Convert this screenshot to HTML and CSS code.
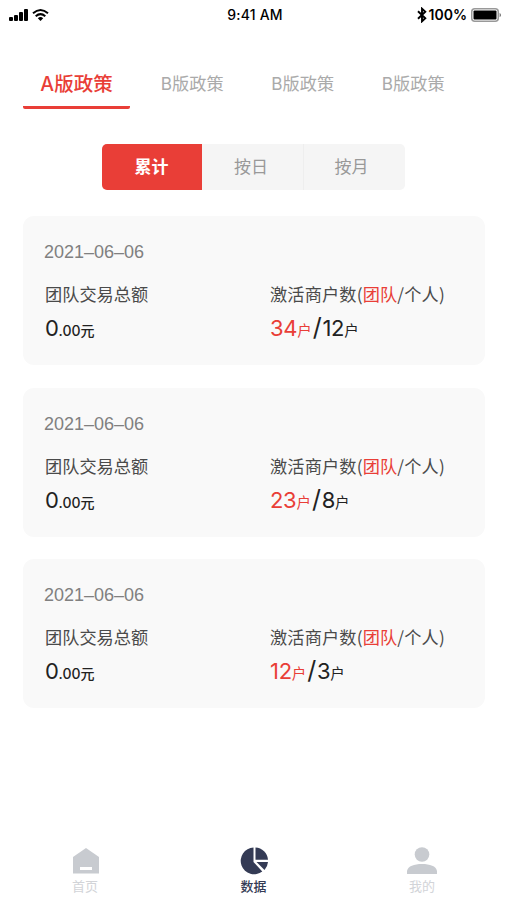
FILE: index.html
```html
<!DOCTYPE html>
<html lang="zh-CN">
<head>
    <meta charset="UTF-8">
    <title>数据</title>
    <link rel="stylesheet" href="styles.css">
</head>
<body>
    <div class="status">
        <div class="status-left">
            <svg width="19" height="12" viewBox="0 0 19 12"><rect x="0" y="8" width="4" height="4" rx="1"/><rect x="5" y="6" width="4" height="6" rx="1"/><rect x="10" y="3" width="4" height="9" rx="1"/><rect x="15" y="0" width="4" height="12" rx="1"/></svg>
            <svg width="17" height="12" viewBox="0 0 17 12"><path d="M1 4.3Q8.5-2.2 16 4.3M3.7 7.2Q8.5 3 13.3 7.2" fill="none" stroke="#000" stroke-width="2"/><path d="M5.8 9.2Q8.5 7 11.2 9.2L8.5 12z"/></svg>
        </div>
        <div class="clock">9:41 AM</div>
        <div class="status-right">
            <svg width="10" height="16" viewBox="0 0 10 16"><path d="M1 4.3L8.3 11.2L5 14.3V1.7L8.3 4.8L1 11.7" fill="none" stroke="#000" stroke-width="1.9"/></svg>
            <span>100%</span>
            <svg class="battery" width="31" height="14" viewBox="0 0 31 14"><rect x=".75" y=".75" width="26.5" height="12.5" rx="3" fill="none" stroke="#999" stroke-width="1.5"/><rect x="2.5" y="2.5" width="23" height="9" rx="1"/><path d="M28.7 4.7Q31 7 28.7 9.3z" fill="#555"/></svg>
        </div>
    </div>

    <div class="tabs">
        <div class="tab active">A版政策</div>
        <div class="tab">B版政策</div>
        <div class="tab">B版政策</div>
        <div class="tab">B版政策</div>
    </div>

    <div class="switch">
        <div class="on">累计</div>
        <div>按日</div>
        <div>按月</div>
    </div>

    <div class="list">
        <div class="card">
            <div class="date">2021–06–06</div>
            <div class="row">
                <div class="col">
                    <div class="label">团队交易总额</div>
                    <div class="value money">0<small>.00元</small></div>
                </div>
                <div class="col">
                    <div class="label">激活商户数(<span class="red">团队</span>/个人)</div>
                    <div class="value"><span class="red">34<small>户</small></span><i>/</i>12<small>户</small></div>
                </div>
            </div>
        </div>
        <div class="card">
            <div class="date">2021–06–06</div>
            <div class="row">
                <div class="col">
                    <div class="label">团队交易总额</div>
                    <div class="value money">0<small>.00元</small></div>
                </div>
                <div class="col">
                    <div class="label">激活商户数(<span class="red">团队</span>/个人)</div>
                    <div class="value"><span class="red">23<small>户</small></span><i>/</i>8<small>户</small></div>
                </div>
            </div>
        </div>
        <div class="card">
            <div class="date">2021–06–06</div>
            <div class="row">
                <div class="col">
                    <div class="label">团队交易总额</div>
                    <div class="value money">0<small>.00元</small></div>
                </div>
                <div class="col">
                    <div class="label">激活商户数(<span class="red">团队</span>/个人)</div>
                    <div class="value"><span class="red">12<small>户</small></span><i>/</i>3<small>户</small></div>
                </div>
            </div>
        </div>
    </div>

    <div class="nav">
        <div class="nav-item">
            <svg width="28" height="28" viewBox="0 0 28 28"><path d="M15 1L28 10V26.5H2V10z" fill="#c8cbd0"/><rect x="9" y="20" width="12" height="3" fill="#fff"/></svg>
            <span>首页</span>
        </div>
        <div class="nav-item current">
            <svg width="28" height="28" viewBox="0 0 28 28"><path d="M13.5.5V15L22.3 24.5A13.4 13.4 0 1 1 13.5.5z"/><path d="M15.5.5A13.4 13.4 0 0 1 28 12.8H15.5z"/><path d="M16.5 15H28A13.4 13.4 0 0 1 24.5 23z"/></svg>
            <span>数据</span>
        </div>
        <div class="nav-item">
            <svg width="30" height="28" viewBox="0 0 30 28"><circle cx="15" cy="7.5" r="7.3" fill="#c8cbd0"/><path d="M0 27V24C1 19 7 17 15 17S29 19 30 24V27z" fill="#c8cbd0"/></svg>
            <span>我的</span>
        </div>
    </div>
</body>
</html>
```
FILE: styles.css
```css
* { box-sizing: border-box; }
body { margin: 0; height: 900px; background: #fff; display: flex; flex-direction: column; font-family: "Liberation Sans", "Noto Sans CJK SC", sans-serif; white-space: nowrap; overflow: hidden; }
svg { display: block; }

.status { height: 29px; padding: 0 5px 0 9px; display: grid; grid-template-columns: 1fr auto 1fr; align-items: center; font: 600 14px/29px Inter, sans-serif; color: #000; }
.status-left { display: flex; gap: 4px; }
.clock { font-weight: 500; letter-spacing: 0.2px; padding-right: 1px; }
.status-right { display: flex; align-items: center; justify-content: flex-end; gap: 2px; }
.battery { margin-left: 2px; }

.tabs { display: flex; padding-left: 23px; margin-top: 30px; height: 50px; }
.tab { width: 110.5px; height: 50px; line-height: 49px; text-align: center; font-family: Inter, "Noto Sans CJK SC", sans-serif; font-size: 17.2px; color: #aaa; }
.tab.active { width: 107px; margin-right: 7px; line-height: 51px; font-size: 19.5px; font-weight: 500; color: #e93e37; border-bottom: 3px solid #e93e37; border-radius: 2px; }

.switch { display: flex; width: 303px; height: 46px; margin: 35px 0 0 102px; background: #f5f5f5; border-radius: 5px; overflow: hidden; font-size: 17px; line-height: 48px; color: #999; }
.switch div { width: 101px; padding-right: 3px; text-align: center; }
.switch div:last-child { width: 102px; border-left: 1px solid #eee; padding-right: 6px; }
.switch .on { width: 100px; padding-right: 1px; background: #e93e37; color: #fff; font-weight: 700; }

.list { display: flex; flex-direction: column; gap: 22.5px; margin: 26px 22px 0 23px; }
.card { height: 149px; padding: 24px 0 0 21px; background: #f9f9f9; border-radius: 11px; }
.date { font-size: 18px; line-height: 24px; color: #808080; }
.row { display: flex; margin-top: 17px; }
.col { flex: none; width: 225px; padding-left: 1px; }
.col + .col { width: 200px; }
.label { font-family: "Noto Sans CJK SC", sans-serif; font-size: 17.2px; line-height: 26px; color: #4a4a4a; }
.col + .col .label { letter-spacing: 0.15px; }
.value { font-family: Inter, "Noto Sans CJK SC", sans-serif; font-size: 22px; line-height: 42px; letter-spacing: -0.3px; color: #222; }
.value small { font-size: 14.5px; letter-spacing: 0; }
.value i { font-style: normal; font-size: 25px; line-height: 1; margin: 0 1px; }
.money small { font-size: 14px; font-weight: 500; }
.red { color: #e93e37; }

.nav { display: flex; justify-content: space-between; margin-top: auto; padding: 0 70px; height: 53px; }
.nav-item { display: flex; flex-direction: column; align-items: center; width: 30px; font-size: 13px; line-height: 24px; color: #d2d4d8; }
.nav-item.current { color: #343b55; fill: #343b55; font-weight: 500; }
```
